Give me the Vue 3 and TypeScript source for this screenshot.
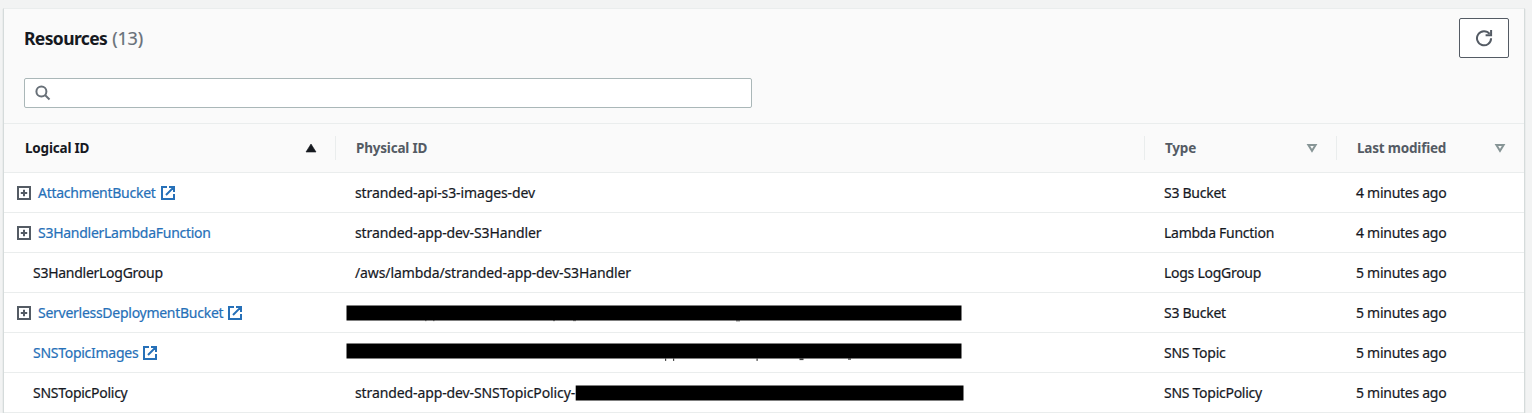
<script setup lang="ts">
interface Redaction {
  x: number
  y: number
  width: number
  // descender tips that stay visible under the bar: [x, width, height]
  tips: [number, number, number][]
}

interface Resource {
  logicalId: string
  expandable?: boolean
  link?: boolean
  external?: boolean
  physicalId?: string
  redaction?: Redaction
  type: string
  modified: string
}

const resources: Resource[] = [
  { logicalId: 'AttachmentBucket', expandable: true, link: true, external: true, physicalId: 'stranded-api-s3-images-dev', type: 'S3 Bucket', modified: '4 minutes ago' },
  { logicalId: 'S3HandlerLambdaFunction', expandable: true, link: true, physicalId: 'stranded-app-dev-S3Handler', type: 'Lambda Function', modified: '4 minutes ago' },
  { logicalId: 'S3HandlerLogGroup', physicalId: '/aws/lambda/stranded-app-dev-S3Handler', type: 'Logs LogGroup', modified: '5 minutes ago' },
  {
    logicalId: 'ServerlessDeploymentBucket', expandable: true, link: true, external: true,
    redaction: { x: 10.5, y: 12.5, width: 615, tips: [[89, 1.5, 0.6], [97, 1.5, 0.6], [217, 2, 0.6], [237, 3, 0.6], [400, 4, 0.8]] },
    type: 'S3 Bucket', modified: '5 minutes ago',
  },
  {
    logicalId: 'SNSTopicImages', link: true, external: true,
    redaction: { x: 10.5, y: 10.5, width: 615, tips: [[329, 1.2, 2.4], [337, 1.2, 2.4], [420.5, 1.2, 2.4], [463.5, 4, 1.6], [512, 3, 1.2]] },
    type: 'SNS Topic', modified: '5 minutes ago',
  },
  {
    logicalId: 'SNSTopicPolicy', physicalId: 'stranded-app-dev-SNSTopicPolicy-',
    redaction: { x: 239.7, y: 12.5, width: 387.8, tips: [] },
    type: 'SNS TopicPolicy', modified: '5 minutes ago',
  },
]
</script>

<template>
  <main class="page">
    <section class="panel">
      <header class="panel-head">
        <div class="title-row">
          <h2 class="title">Resources <span class="count">(13)</span></h2>
          <button class="refresh" aria-label="Refresh">
            <svg width="18" height="18" viewBox="0 0 18 18" fill="none" stroke="#545b64" stroke-width="2">
              <path d="M16.1 9.3A7.05 7.05 0 1 1 14.6 4.9" />
              <path d="M16.1 1V6.2H10.6" />
            </svg>
          </button>
        </div>
        <label class="search">
          <svg width="16" height="16" viewBox="0 0 16 16" fill="none" stroke="#687078" stroke-width="2">
            <circle cx="6.4" cy="6.4" r="5" />
            <path d="M10 10L14.5 14.5" />
          </svg>
          <input type="text" aria-label="Search resources" />
        </label>
      </header>

      <div class="grid head">
        <div class="th sorted">
          <span>Logical ID</span>
          <svg class="sort" width="12" height="10" viewBox="0 0 12 10"><path d="M6 1L11 9H1Z" fill="#16191f" stroke="#16191f" stroke-width=".6" /></svg>
        </div>
        <div class="th"><span>Physical ID</span></div>
        <div class="th type">
          <span>Type</span>
          <svg class="sort" width="12" height="10" viewBox="0 0 12 10"><path d="M2.4 2H9.6L6 7.8Z" fill="none" stroke="#879596" stroke-width="2" /></svg>
        </div>
        <div class="th">
          <span>Last modified</span>
          <svg class="sort" width="12" height="10" viewBox="0 0 12 10"><path d="M2.4 2H9.6L6 7.8Z" fill="none" stroke="#879596" stroke-width="2" /></svg>
        </div>
      </div>

      <div v-for="r in resources" :key="r.logicalId" class="grid row">
        <div class="td logical" :class="{ expandable: r.expandable }">
          <svg v-if="r.expandable" class="expander" width="14" height="14" viewBox="0 0 14 14" fill="none" stroke="#545b64" stroke-width="2">
            <rect x="1" y="1" width="12" height="12" />
            <path d="M7 3.8V10.2M3.8 7H10.2" />
          </svg>
          <span :class="{ link: r.link }">{{ r.logicalId }}</span>
          <svg v-if="r.external" class="external" width="14" height="14" viewBox="0 0 14 14" fill="none" stroke="#2670b8" stroke-width="2">
            <path d="M6 1H1V13H13V8M8 1H13V6M12.6 1.4L5 9" />
          </svg>
        </div>
        <div class="td physical">
          <span v-if="r.physicalId">{{ r.physicalId }}</span>
          <svg v-if="r.redaction" class="redaction" width="700" height="39" viewBox="0 0 700 39">
            <rect :x="r.redaction.x" :y="r.redaction.y" :width="r.redaction.width" height="15" />
            <rect v-for="(t, i) in r.redaction.tips" :key="i" :x="t[0]" :y="r.redaction.y + 15" :width="t[1]" :height="t[2]" fill-opacity=".75" />
          </svg>
        </div>
        <div class="td">{{ r.type }}</div>
        <div class="td">{{ r.modified }}</div>
      </div>
    </section>
  </main>
</template>

<style>
body {
  margin: 0;
  background: #f2f3f3;
}
</style>

<style scoped>
.page {
  height: 413px;
  overflow: hidden;
  box-sizing: border-box;
  padding: 8px 7px 0 3px;
  background: #f2f3f3;
  color: #16191f;
  font: 14px/22px "Noto Sans", "Open Sans", sans-serif;
  letter-spacing: -0.27px;
}
.panel {
  box-sizing: border-box;
  border: 1px solid #d5dbdb;
  border-top-color: #eaeded;
  border-bottom: 0;
  background: #fff;
  box-shadow: 0 1px 1px rgba(0, 28, 36, 0.2);
}
.panel-head {
  box-sizing: border-box;
  height: 115px;
  padding: 9px 15px 0 20px;
  background: #fafafa;
  border-bottom: 1px solid #eaeded;
}
.title-row {
  display: flex;
  justify-content: space-between;
  height: 60px;
}
.title {
  margin: 8px 0 0;
  font-size: 17.5px;
  line-height: 24px;
  letter-spacing: -0.62px;
  white-space: pre;
}
.count {
  margin-left: 1px;
  color: #687078;
  font-size: 18px;
  font-weight: 400;
  letter-spacing: -0.1px;
  -webkit-text-stroke: 0.2px currentColor;
}
.refresh {
  display: flex;
  align-items: center;
  justify-content: center;
  box-sizing: border-box;
  width: 50px;
  height: 40px;
  padding: 0;
  border: 1px solid #545b64;
  border-radius: 2px;
  background: #fff;
}
.search {
  display: flex;
  align-items: center;
  box-sizing: border-box;
  width: 728px;
  height: 30px;
  padding-left: 10px;
  border: 1px solid #aab7b8;
  border-radius: 2px;
  background: #fff;
}
.search input {
  flex: 1;
  border: 0;
  outline: 0;
  background: transparent;
}
.grid {
  display: grid;
  grid-template-columns: 332px 809px 192px 187px;
  box-sizing: border-box;
}
.head {
  height: 49px;
  padding: 12px 0;
  background: #fafafa;
  border-bottom: 1px solid #eaeded;
}
.th {
  display: flex;
  align-items: center;
  justify-content: space-between;
  box-sizing: border-box;
  padding: 0 18px 0 20px;
  border-right: 1px solid #eaeded;
  color: #545b64;
  font-size: 13.5px;
  font-weight: 700;
  letter-spacing: -0.2px;
}
.th:first-child {
  padding-left: 21px;
}
.th:last-child {
  border-right: 0;
}
.sorted {
  color: #16191f;
}
.row {
  height: 40px;
  border-bottom: 1px solid #eaeded;
}
.td {
  display: flex;
  align-items: center;
  position: relative;
  padding-left: 19px;
  padding-top: 1px;
  white-space: nowrap;
  -webkit-text-stroke: 0.2px currentColor;
}
.physical {
  letter-spacing: -0.11px;
}
.logical {
  padding-left: 29px;
}
.logical.expandable {
  padding-left: 13px;
}
.expander {
  margin-right: 7px;
}
.external {
  margin-left: 5px;
}
.link {
  color: #2670b8;
}
.redaction {
  position: absolute;
  left: 0;
  top: 0;
}
</style>
